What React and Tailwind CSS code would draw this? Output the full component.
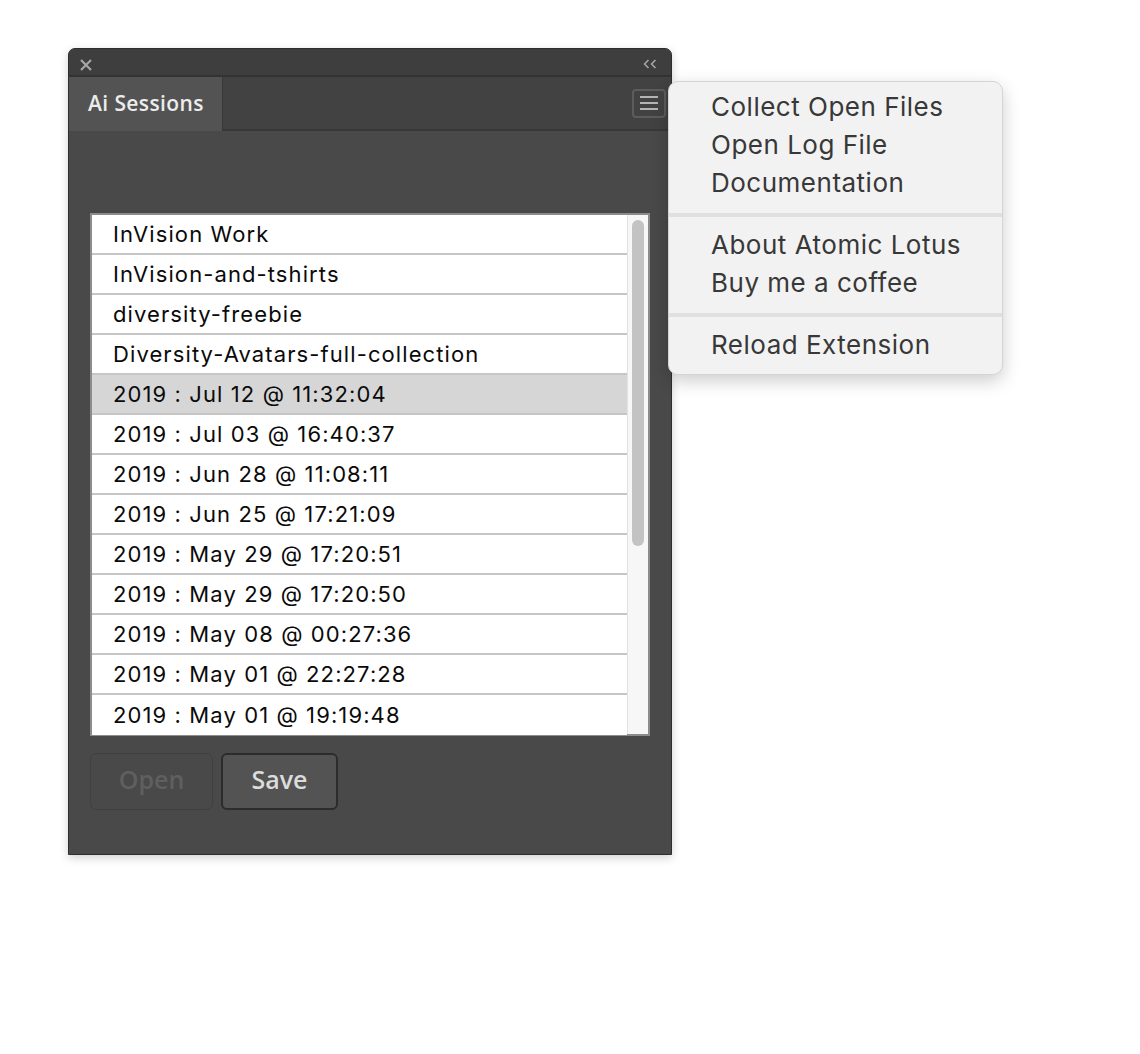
import React from "react";

const sessions = [
  "InVision Work",
  "InVision-and-tshirts",
  "diversity-freebie",
  "Diversity-Avatars-full-collection",
  "2019 : Jul 12 @ 11:32:04",
  "2019 : Jul 03 @ 16:40:37",
  "2019 : Jun 28 @ 11:08:11",
  "2019 : Jun 25 @ 17:21:09",
  "2019 : May 29 @ 17:20:51",
  "2019 : May 29 @ 17:20:50",
  "2019 : May 08 @ 00:27:36",
  "2019 : May 01 @ 22:27:28",
  "2019 : May 01 @ 19:19:48",
];

const menuGroups = [
  ["Collect Open Files", "Open Log File", "Documentation"],
  ["About Atomic Lotus", "Buy me a coffee"],
  ["Reload Extension"],
];

export default function App() {
  const selected = 4;

  return (
    <div className="relative w-[1140px] h-[1054px] bg-white overflow-hidden">
      {/* panel */}
      <div className="ml-[68px] pt-[48px]">
        <div className="w-[604px] h-[807px] flex flex-col rounded-t-[7px] border border-[#2e2e2e] bg-[#494949] shadow-[0_3px_10px_rgba(0,0,0,0.18)] overflow-hidden">
          {/* title bar */}
          <div className="h-[28px] flex items-start justify-between pt-[10px] pl-[11px] pr-[14px] bg-[#3e3e3e] border-b-2 border-[#333333]">
            <svg width="12" height="12" viewBox="0 0 12 12">
              <path d="M1 1 L11 11 M11 1 L1 11" stroke="#a6a6a6" strokeWidth="2.2" />
            </svg>
            <svg width="14" height="10" viewBox="0 0 14 10">
              <path d="M5.5 1 L1.5 5 L5.5 9 M12.5 1 L8.5 5 L12.5 9" stroke="#a8a8a8" strokeWidth="1.5" fill="none" />
            </svg>
          </div>

          {/* tab row */}
          <div className="h-[54px] flex">
            <div
              className="w-[153px] bg-[#535353] flex items-center pl-[19px] text-[21px] font-semibold tracking-[0.4px] text-[#ececec]"
              style={{ fontFamily: '"Open Sans", sans-serif' }}
            >
              Ai Sessions
            </div>
            <div className="flex-1 flex items-center justify-end pr-[5px] bg-[#424242] border-l border-b-2 border-[#383838]">
              <div className="w-[34px] h-[29px] rounded-[4px] border-2 border-[#5c5c5c] flex flex-col items-center justify-center gap-[4px]">
                <div className="w-[18px] h-[2px] bg-[#b4b4b4]" />
                <div className="w-[18px] h-[2px] bg-[#b4b4b4]" />
                <div className="w-[18px] h-[2px] bg-[#b4b4b4]" />
              </div>
            </div>
          </div>

          {/* body */}
          <div className="flex-1 pt-[82px] pl-[21px]">
            <div
              className="w-[560px] h-[523px] border-2 border-[#8c8c8c] bg-white flex"
              style={{ fontFamily: 'Inter, "Liberation Sans", sans-serif' }}
            >
              <div className="w-[535px] flex flex-col">
                {sessions.map((s, i) => (
                  <div
                    key={s}
                    className={
                      "h-[40px] shrink-0 flex items-center pl-[21px] text-[22px] tracking-[1.1px] text-[#0a0a0a] " +
                      (i < sessions.length - 1 ? "border-b-2 border-[#c6c6c6] " : "") +
                      (i === selected ? "bg-[#d6d6d6]" : "bg-white")
                    }
                  >
                    {s}
                  </div>
                ))}
              </div>
              <div className="flex-1 bg-[#f7f7f7] border-l border-[#e2e2e2] pt-[5px] pl-[4px]">
                <div className="w-[12px] h-[326px] rounded-full bg-[#c3c3c3]" />
              </div>
            </div>

            <div
              className="flex gap-[8px] mt-[17px]"
              style={{ fontFamily: '"Open Sans", sans-serif' }}
            >
              <div className="w-[123px] h-[57px] pb-[3px] rounded-[6px] border border-[#404040] flex items-center justify-center text-[25px] font-semibold text-[#5f5f5f]">
                Open
              </div>
              <div className="w-[117px] h-[57px] pb-[3px] rounded-[6px] border-2 border-[#2c2c2c] bg-[#535353] flex items-center justify-center text-[25px] font-semibold text-[#dcdcdc]">
                Save
              </div>
            </div>
          </div>
        </div>
      </div>

      {/* dropdown menu */}
      <div
        className="absolute left-[668px] top-[81px] w-[335px] rounded-[10px] border border-[#d4d4d4] bg-[#f2f2f2] shadow-[0_6px_18px_rgba(0,0,0,0.2)] pt-[5px] pb-[11px]"
        style={{ fontFamily: 'Inter, "Liberation Sans", sans-serif' }}
      >
        {menuGroups.map((group, gi) => (
          <div key={gi}>
            {gi > 0 && <div className="h-[4px] bg-[#e0e0e0] mt-[12px] mb-[8px]" />}
            {group.map((item) => (
              <div key={item} className="h-[38px] flex items-center pl-[42px] text-[26px] tracking-[0.5px] text-[#383838]">
                {item}
              </div>
            ))}
          </div>
        ))}
      </div>
    </div>
  );
}
